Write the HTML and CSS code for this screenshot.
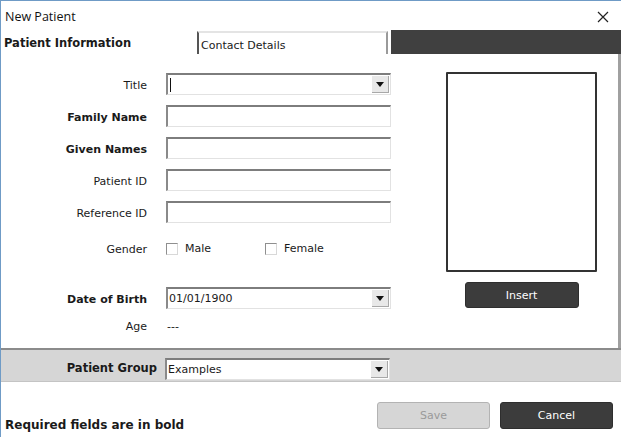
FILE: index.html
```html
<!DOCTYPE html>
<html>
<head>
<meta charset="utf-8">
<link rel="stylesheet" href="styles.css">
</head>
<body>
<div class="window">
  <div class="titlebar">
    <span class="title">New Patient</span>
    <svg class="close" width="12" height="12" viewBox="0 0 12 12"><path d="M1 1L11 11M11 1L1 11" stroke="#222" stroke-width="1.2" fill="none"/></svg>
  </div>
  <div class="tabs">
    <div class="tab active">Patient Information</div>
    <div class="tab other">Contact Details</div>
    <div class="tab-gap"></div>
    <div class="tab-fill"></div>
  </div>
  <div class="content">
    <div class="form">
      <div class="row r-title">
        <label class="lbl">Title</label>
        <div class="field combo"><span class="caret"></span><span class="drop"><i></i></span></div>
      </div>
      <div class="row">
        <label class="lbl req">Family Name</label>
        <div class="field"></div>
      </div>
      <div class="row">
        <label class="lbl req">Given Names</label>
        <div class="field"></div>
      </div>
      <div class="row">
        <label class="lbl">Patient ID</label>
        <div class="field"></div>
      </div>
      <div class="row">
        <label class="lbl">Reference ID</label>
        <div class="field"></div>
      </div>
      <div class="row r-gender">
        <label class="lbl">Gender</label>
        <div class="checks">
          <span class="chk"><span class="box"></span>Male</span>
          <span class="chk"><span class="box"></span>Female</span>
        </div>
      </div>
      <div class="row r-dob">
        <label class="lbl req">Date of Birth</label>
        <div class="field combo"><span class="val">01/01/1900</span><span class="drop"><i></i></span></div>
      </div>
      <div class="row r-age">
        <label class="lbl">Age</label>
        <span class="age">---</span>
      </div>
    </div>
    <div class="photo-col">
      <div class="photo"></div>
      <button class="btn dark insert">Insert</button>
    </div>
  </div>
  <div class="group-bar">
    <label class="glbl">Patient Group</label>
    <div class="field combo gfield"><span class="val">Examples</span><span class="drop"><i></i></span></div>
  </div>
  <div class="footer">
    <span class="note">Required fields are in bold</span>
    <div class="actions">
      <button class="btn light">Save</button>
      <button class="btn dark">Cancel</button>
    </div>
  </div>
</div>
</body>
</html>
```
FILE: styles.css
```css
* { box-sizing: border-box; }
html, body { margin: 0; padding: 0; background: #fff; }
body { width: 621px; height: 437px; overflow: hidden; font-family: "DejaVu Sans", Tahoma, sans-serif; font-size: 11px; color: #1a1a1a; }
.window { width: 621px; height: 437px; border-top: 1px solid #6f9bc6; border-left: 1px solid #6f9bc6; display: flex; flex-direction: column; }
.titlebar { height: 30px; display: flex; align-items: center; justify-content: space-between; padding: 1px 12px 0 4px; }
.title { font-family: "Open Sans", "Noto Sans", sans-serif; font-size: 12.5px; color: #111; }
.close { display: block; }
.tabs { height: 23px; display: flex; }
.tab { height: 23px; display: flex; align-items: center; }
.tab.active { width: 196px; font-weight: bold; font-size: 11.5px; padding-left: 3px; padding-top: 1px; }
.tab.other { width: 191px; border-top: 2px solid #e4e4e4; border-left: 2px solid #555; border-right: 2px solid #9a9a9a; padding-left: 2px; padding-top: 3px; }
.tab-gap { width: 3px; }
.tab-fill { flex: 1; background: #404040; margin-top: -1px; height: 24px; }
.content { height: 294px; flex: none; display: flex; border-right: 3px solid #a0a0a0; }
.form { width: 391px; padding-top: 19px; }
.row { height: 22px; display: flex; align-items: center; margin-bottom: 10px; }
.lbl { width: 146px; text-align: right; margin-right: 19px; padding-top: 2px; }
.req { font-weight: bold; }
.field { width: 225px; height: 22px; border-top: 2px solid #7d7d7d; border-left: 2px solid #8a8a8a; border-bottom: 1px solid #e2e2e2; border-right: 1px solid #e2e2e2; background: #fff; position: relative; display: flex; align-items: center; }
.caret { width: 1px; height: 14px; background: #111; margin-left: 2px; }
.val { padding-left: 1px; }
.drop { position: absolute; right: 1px; top: 1px; width: 17px; height: 17px; background: #e8e8e8; border-right: 1px solid #a8a8a8; border-bottom: 1px solid #a8a8a8; display: flex; align-items: center; justify-content: center; }
.drop i { width: 0; height: 0; border-left: 4px solid transparent; border-right: 4px solid transparent; border-top: 5px solid #111; }
.r-gender { margin-top: 14px; margin-bottom: 28px; }
.checks { display: flex; padding-top: 1px; }
.chk { display: flex; align-items: center; width: 99px; }
.box { width: 12px; height: 12px; border: 1px solid #8f8f8f; border-bottom-color: #d8d8d8; border-right-color: #d8d8d8; margin-right: 7px; background: #fff; }
.r-dob { margin-bottom: 5px; }
.age { margin-left: 1px; padding-top: 2px; }
.photo-col { margin-left: 54px; padding-top: 18px; display: flex; flex-direction: column; align-items: center; width: 151px; }
.photo { width: 151px; height: 200px; border: 2px solid #333; border-radius: 1px; }
.btn { font-family: "DejaVu Sans", Tahoma, sans-serif; font-size: 11px; border-radius: 3px; height: 27px; display: flex; align-items: center; justify-content: center; }
.btn.dark { background: #3c3c3c; color: #fff; border: 1px solid #2e2e2e; }
.btn.light { background: #d6d6d6; color: #9a9a9a; border: 1px solid #b3b3b3; }
.insert { width: 114px; height: 26px; margin-top: 10px; }
.group-bar { height: 34px; flex: none; background: #d6d6d6; border-top: 2px solid #8b8b8b; border-bottom: 1px solid #c4c4c4; display: flex; align-items: flex-end; padding-bottom: 1px; }
.glbl { width: 156px; text-align: right; margin-right: 8px; font-weight: bold; font-size: 11.5px; align-self: center; padding-top: 5px; }
.gfield { width: 225px; }
.footer { flex: 1; display: flex; justify-content: space-between; padding: 20px 8px 0 4px; position: relative; }
.note { font-weight: bold; align-self: flex-end; margin-bottom: 5px; font-size: 12px; }
.actions { display: flex; gap: 10px; align-self: flex-start; }
.actions .btn { width: 113px; height: 27px; }
```
